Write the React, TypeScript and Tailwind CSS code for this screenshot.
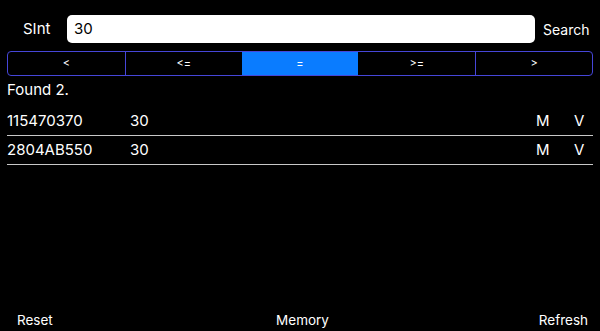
import React from "react";

const ops = ["<", "<=", "=", ">=", ">"];
const rows = [
  { addr: "115470370", value: "30" },
  { addr: "2804AB550", value: "30" },
];

export default function App() {
  const selected = 2;
  return (
    <div
      className="w-[600px] h-[331px] bg-black text-white flex flex-col overflow-hidden"
      style={{ fontFamily: "Inter, 'Noto Sans', sans-serif" }}
    >
      <div className="flex items-center pt-[15px] h-[43px]">
        <span className="w-[67px] pl-[23px] text-[15px]">SInt</span>
        <div className="w-[468px] h-[28px] bg-white rounded-[5px] flex items-center px-[7px] text-black text-[15px]">
          30
        </div>
        <span className="ml-[8px] text-[14px]">Search</span>
      </div>

      <div className="mx-[7px] mt-[8px] h-[25px] grid grid-cols-5 border border-[#4646d8] rounded-[4px] overflow-hidden">
        {ops.map((op, i) => (
          <div
            key={op}
            className={`flex items-center justify-center text-[11px] ${
              i === selected ? "bg-[#0a7cff]" : ""
            } ${i > 0 && i !== selected && i !== selected + 1 ? "border-l border-[#4646d8]" : ""}`}
          >
            {op}
          </div>
        ))}
      </div>

      <div className="pl-[7px] mt-[6px] text-[15px] leading-[16px]">Found 2.</div>

      <div className="mx-[7px] mt-[9px]">
        {rows.map((r) => (
          <div key={r.addr} className="flex items-center h-[29px] border-b border-[#c8c8c8] text-[15px]">
            <span className="w-[123px]">{r.addr}</span>
            <span className="flex-1">{r.value}</span>
            <span className="w-[38px]">M</span>
            <span className="w-[10px] mr-[9px]">V</span>
          </div>
        ))}
      </div>

      <div className="mt-auto flex items-center px-[12px] h-[22px] text-[13.5px]">
        <span className="flex-1 pl-[5px]">Reset</span>
        <span>Memory</span>
        <span className="flex-1 text-right">Refresh</span>
      </div>
    </div>
  );
}
